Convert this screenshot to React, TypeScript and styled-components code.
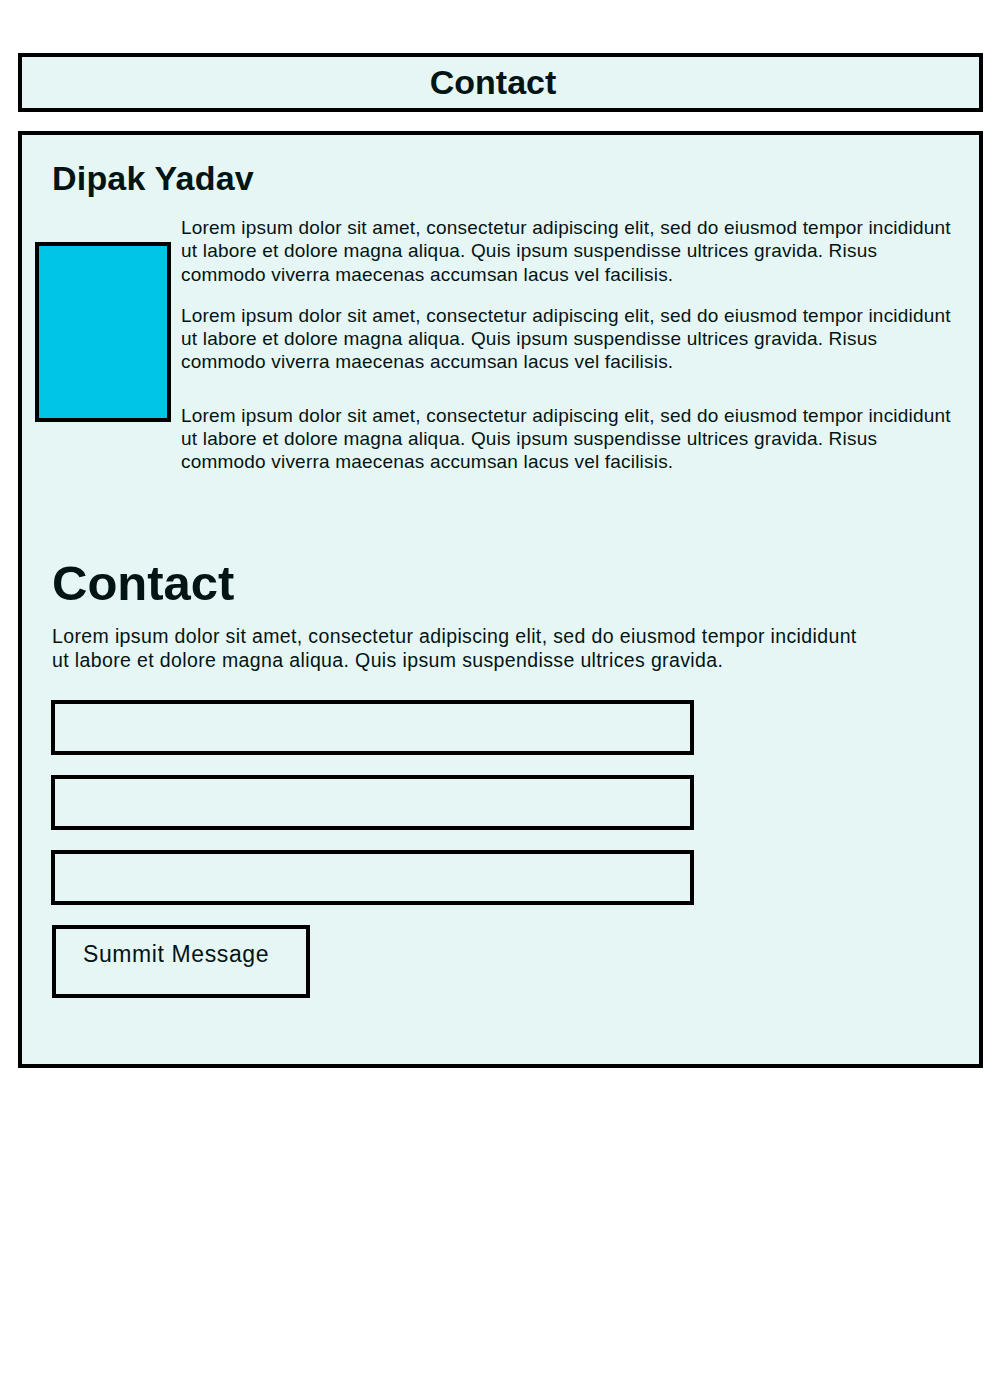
import React from 'react';
import styled, { createGlobalStyle } from 'styled-components';

const GlobalStyle = createGlobalStyle`
    * {
        box-sizing: border-box;
    }
    body {
        margin: 0;
        background: #ffffff;
        font-family: "Liberation Sans", Arial, sans-serif;
        color: #031414;
    }
`;

const Page = styled.div`
    padding: 53px 17px 0 18px;
`;

const Header = styled.header`
    height: 59px;
    border: 4px solid #000;
    background-color: #e6f6f5;
    display: flex;
    align-items: center;
    justify-content: center;
    padding: 0 15px 2px 0;
    >h1{
        margin: 0;
        font-size: 34px;
        font-weight: 700;
        line-height: 38px;
    }
`;

const Main = styled.main`
    margin-top: 19px;
    border: 4px solid #000;
    background-color: #e6f6f5;
    padding: 23px 17px 66px 13px;
`;

const Name = styled.h2`
    margin: 0 0 0 17px;
    font-size: 34px;
    font-weight: 700;
    line-height: 40px;
    letter-spacing: 0.2px;
`;

const Intro = styled.section`
    margin-top: 18px;
    display: flex;
    align-items: flex-start;
    gap: 10px;
`;

const Photo = styled.div`
    flex: none;
    width: 136px;
    height: 180px;
    margin-top: 26px;
    border: 4px solid #000;
    background-color: #00c5e6;
`;

const Bio = styled.div`
    width: 778px;
`;

const BioText = styled.p<{ $gap?: number }>`
    margin: ${(p) => p.$gap ?? 0}px 0 0;
    font-size: 19px;
    line-height: 23.3px;
    letter-spacing: 0.2px;
`;

const ContactSection = styled.section`
    margin: 81px 0 0 16px;
`;

const Title = styled.h2`
    margin: 0 0 0 1px;
    font-size: 49px;
    font-weight: 700;
    line-height: 56px;
`;

const Lead = styled.p`
    width: 815px;
    margin: 13px 0 0 1px;
    font-size: 19.5px;
    line-height: 24px;
    letter-spacing: 0.37px;
`;

const Form = styled.form`
    margin-top: 28px;
    display: flex;
    flex-direction: column;
    align-items: flex-start;
    gap: 20px;
`;

const Input = styled.input`
    width: 643px;
    height: 55px;
    border: 4px solid #000;
    border-radius: 0;
    background-color: #e6f6f5;
    padding: 0 12px;
    font-family: inherit;
    font-size: 18px;
    outline: none;
`;

const Button = styled.button`
    width: 258px;
    height: 73px;
    margin-left: 1px;
    border: 4px solid #000;
    border-radius: 0;
    background-color: #e6f6f5;
    color: #031414;
    padding: 12px 27px 0;
    display: flex;
    align-items: flex-start;
    font-family: inherit;
    font-size: 23px;
    line-height: 26px;
    letter-spacing: 0.6px;
    cursor: pointer;
`;

const lorem = 'Lorem ipsum dolor sit amet, consectetur adipiscing elit, sed do eiusmod tempor incididunt ut labore et dolore magna aliqua. Quis ipsum suspendisse ultrices gravida. Risus commodo viverra maecenas accumsan lacus vel facilisis.';

const App = () => {
    return (
        <Page>
            <GlobalStyle />
            <Header>
                <h1>Contact</h1>
            </Header>
            <Main>
                <Name>Dipak Yadav</Name>
                <Intro>
                    <Photo />
                    <Bio>
                        <BioText>{lorem}</BioText>
                        <BioText $gap={18}>{lorem}</BioText>
                        <BioText $gap={30}>{lorem}</BioText>
                    </Bio>
                </Intro>
                <ContactSection>
                    <Title>Contact</Title>
                    <Lead>
                        Lorem ipsum dolor sit amet, consectetur adipiscing elit, sed do eiusmod tempor incididunt ut labore et dolore magna aliqua. Quis ipsum suspendisse ultrices gravida.
                    </Lead>
                    <Form onSubmit={(e) => e.preventDefault()}>
                        <Input type="text" />
                        <Input type="email" />
                        <Input type="text" />
                        <Button type="submit">Summit Message</Button>
                    </Form>
                </ContactSection>
            </Main>
        </Page>
    );
};

export default App;
